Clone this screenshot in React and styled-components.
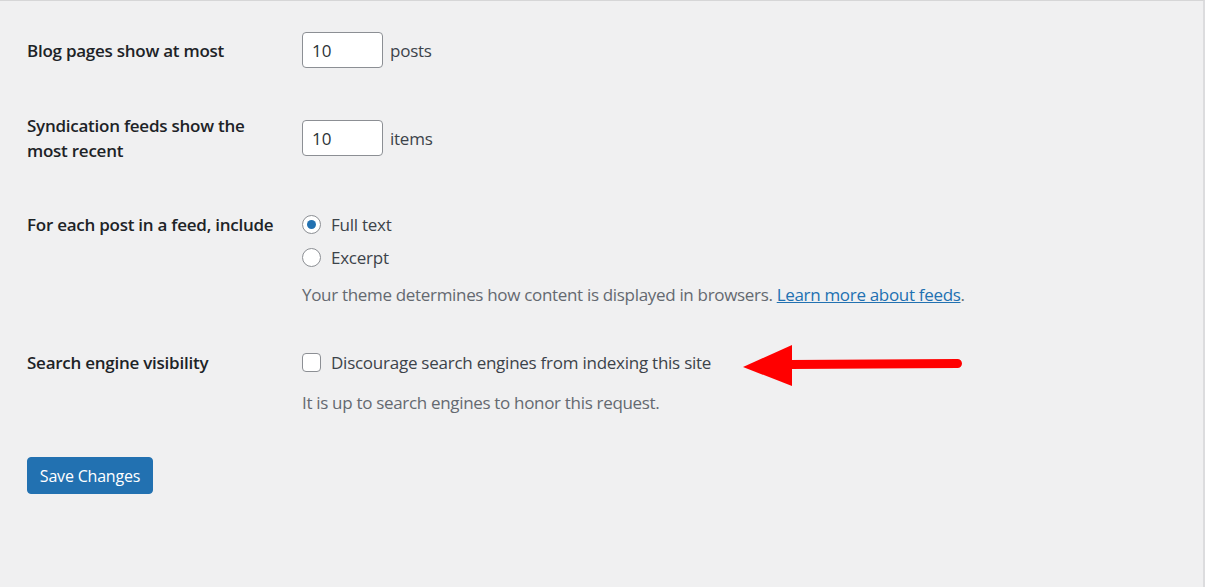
import React, { useState } from 'react';
import styled, { createGlobalStyle } from 'styled-components';

const GlobalStyle = createGlobalStyle`
  html, body {
    margin: 0;
    padding: 0;
    background: #f0f0f1;
  }
  body {
    font-family: "Open Sans", "Noto Sans", sans-serif;
    color: #3c434a;
  }
`;

const Page = styled.div`
  position: relative;
  box-sizing: border-box;
  width: 1205px;
  height: 587px;
  overflow: hidden;
  border-top: 1px solid #d6d6d7;
  border-right: 2px solid #dcdcde;
  padding: 31px 0 0 27px;
`;

const Row = styled.div`
  display: grid;
  grid-template-columns: 275px 1fr;
  align-items: ${(p) => (p.$center ? 'center' : 'start')};
  margin-top: ${(p) => p.$top || 0}px;
`;

const Label = styled.div`
  font-size: 17px;
  font-weight: 600;
  line-height: 25px;
  color: #1d2327;
  letter-spacing: -0.25px;
`;

const Field = styled.div`
  display: flex;
  flex-direction: column;
`;

const Inline = styled.div`
  display: flex;
  align-items: center;
  gap: 7px;
  font-size: 17px;
  line-height: 25px;
  letter-spacing: -0.25px;
`;

const NumberInput = styled.input`
  box-sizing: border-box;
  width: 81px;
  height: 36px;
  padding: 0 9px;
  border: 1px solid #8c8f94;
  border-radius: 4px;
  background: #fff;
  font-family: inherit;
  font-size: 17px;
  color: #2c3338;
  outline: none;
`;

const Choice = styled.label`
  display: flex;
  align-items: center;
  gap: 10px;
  font-size: 17px;
  line-height: 25px;
  letter-spacing: -0.25px;
  color: #3c434a;
  margin-top: ${(p) => p.$top || 0}px;
`;

const Radio = styled.span`
  box-sizing: border-box;
  width: 19px;
  height: 19px;
  border-radius: 50%;
  border: 1px solid #8c8f94;
  background: #fff;
  display: flex;
  align-items: center;
  justify-content: center;

  &::after {
    content: '';
    width: 9px;
    height: 9px;
    border-radius: 50%;
    background: ${(p) => (p.$checked ? '#2271b1' : 'transparent')};
  }
`;

const Checkbox = styled.span`
  box-sizing: border-box;
  width: 19px;
  height: 19px;
  border-radius: 4px;
  border: 1px solid #8c8f94;
  background: #fff;
`;

const Description = styled.p`
  margin: ${(p) => p.$top || 0}px 0 0;
  font-size: 17px;
  line-height: 25px;
  letter-spacing: -0.32px;
  color: #646970;

  a {
    color: #2271b1;
    text-decoration: underline;
  }
`;

const SaveButton = styled.button`
  margin-top: 42px;
  box-sizing: border-box;
  width: 126px;
  height: 37px;
  padding: 0;
  border: 1px solid #2271b1;
  border-radius: 4px;
  background: #2271b1;
  color: #fff;
  font-family: inherit;
  font-size: 16px;
  letter-spacing: -0.2px;
  cursor: pointer;
`;

const Arrow = styled.svg`
  position: absolute;
  left: 740px;
  top: 340px;
`;

export default function App() {
  const [feed, setFeed] = useState('full');

  return (
    <>
      <GlobalStyle />
      <Page>
        <Row $center>
          <Label>Blog pages show at most</Label>
          <Inline>
            <NumberInput defaultValue="10" />
            <span>posts</span>
          </Inline>
        </Row>

        <Row $center $top={45}>
          <Label>
            Syndication feeds show the
            <br />
            most recent
          </Label>
          <Inline>
            <NumberInput defaultValue="10" />
            <span>items</span>
          </Inline>
        </Row>

        <Row $top={49}>
          <Label>For each post in a feed, include</Label>
          <Field>
            <Choice onClick={() => setFeed('full')}>
              <Radio $checked={feed === 'full'} />
              Full text
            </Choice>
            <Choice $top={8} onClick={() => setFeed('excerpt')}>
              <Radio $checked={feed === 'excerpt'} />
              Excerpt
            </Choice>
            <Description $top={12}>
              Your theme determines how content is displayed in browsers.{' '}
              <a href="#feeds">Learn more about feeds</a>.
            </Description>
          </Field>
        </Row>

        <Row $top={43}>
          <Label>Search engine visibility</Label>
          <Field>
            <Choice>
              <Checkbox />
              Discourage search engines from indexing this site
            </Choice>
            <Description $top={15}>It is up to search engines to honor this request.</Description>
          </Field>
        </Row>

        <SaveButton>Save Changes</SaveButton>

        <Arrow width="225" height="48" viewBox="0 0 225 48">
          <line x1="50" y1="23.5" x2="217.5" y2="22.5" stroke="#ff0000" strokeWidth="9" strokeLinecap="round" />
          <polygon points="3,26 52,4 52,45" fill="#ff0000" />
        </Arrow>
      </Page>
    </>
  );
}
